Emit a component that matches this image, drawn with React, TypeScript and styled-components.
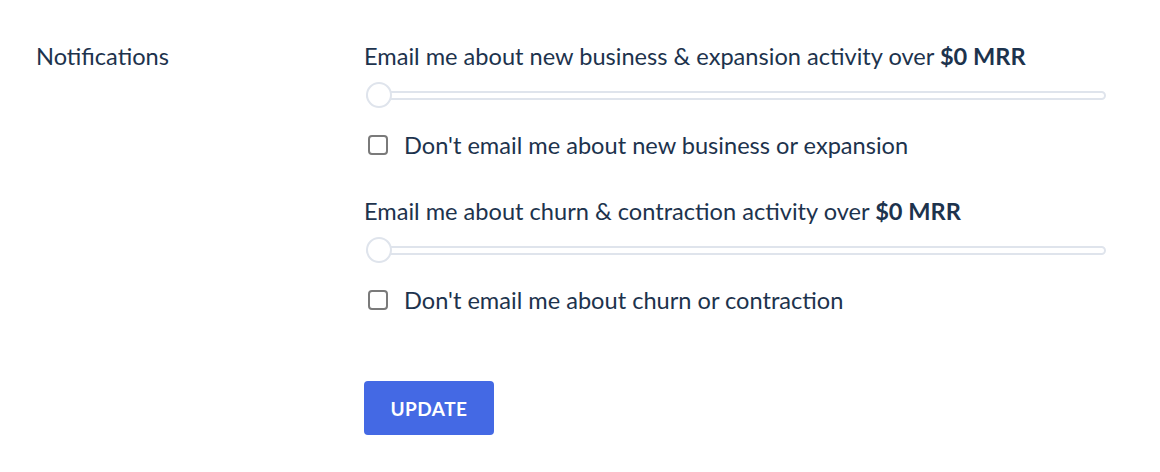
import styled, { createGlobalStyle } from 'styled-components';

const GlobalStyle = createGlobalStyle`
  body {
    margin: 0;
    background: #ffffff;
    font-family: Lato, "Noto Sans", sans-serif;
    color: #1d334d;
  }
`;

const Page = styled.div`
  display: grid;
  grid-template-columns: 328px 742px;
  padding: 40px 0 0 36px;
`;

const SectionLabel = styled.div`
  font-size: 23.6px;
  line-height: 32px;
`;

const Fields = styled.div`
  display: flex;
  flex-direction: column;
`;

const Group = styled.div`
  display: flex;
  flex-direction: column;
  margin-bottom: 34px;
`;

const Heading = styled.div`
  font-size: 23.6px;
  line-height: 32px;

  strong {
    font-weight: 700;
  }
`;

const Slider = styled.div`
  position: relative;
  height: 26px;
  margin: 10px 0 21px;
  display: flex;
  align-items: center;
`;

const Track = styled.div`
  flex: 1;
  height: 9px;
  box-sizing: border-box;
  border: 2px solid #dfe4ec;
  border-radius: 5px;
  margin-left: 2px;
`;

const Thumb = styled.div`
  position: absolute;
  left: 2px;
  top: 0;
  width: 26px;
  height: 26px;
  box-sizing: border-box;
  border: 2px solid #dfe4ec;
  border-radius: 50%;
  background: #ffffff;
`;

const CheckRow = styled.label`
  display: flex;
  align-items: center;
  gap: 16px;
  font-size: 23.6px;
  line-height: 32px;
  padding-left: 4px;
`;

const Box = styled.span`
  width: 20px;
  height: 20px;
  box-sizing: border-box;
  border: 2px solid #7a7a7a;
  border-radius: 4px;
`;

const UpdateButton = styled.button`
  align-self: flex-start;
  width: 130px;
  height: 54px;
  margin-top: 31px;
  border: none;
  border-radius: 4px;
  background: #4469e4;
  color: #ffffff;
  font-family: Lato, "Noto Sans", sans-serif;
  font-size: 19px;
  font-weight: 700;
  letter-spacing: 0.5px;
`;

type NotifyProps = {
  heading: string;
  optOut: string;
};

const NotifyGroup = ({ heading, optOut }: NotifyProps) => (
  <Group>
    <Heading>
      {heading} <strong>$0 MRR</strong>
    </Heading>
    <Slider>
      <Track />
      <Thumb />
    </Slider>
    <CheckRow>
      <Box />
      {optOut}
    </CheckRow>
  </Group>
);

const App = () => (
  <>
    <GlobalStyle />
    <Page>
      <SectionLabel>Notifications</SectionLabel>
      <Fields>
        <NotifyGroup
          heading="Email me about new business & expansion activity over"
          optOut="Don't email me about new business or expansion"
        />
        <NotifyGroup
          heading="Email me about churn & contraction activity over"
          optOut="Don't email me about churn or contraction"
        />
        <UpdateButton>UPDATE</UpdateButton>
      </Fields>
    </Page>
  </>
);

export default App;
